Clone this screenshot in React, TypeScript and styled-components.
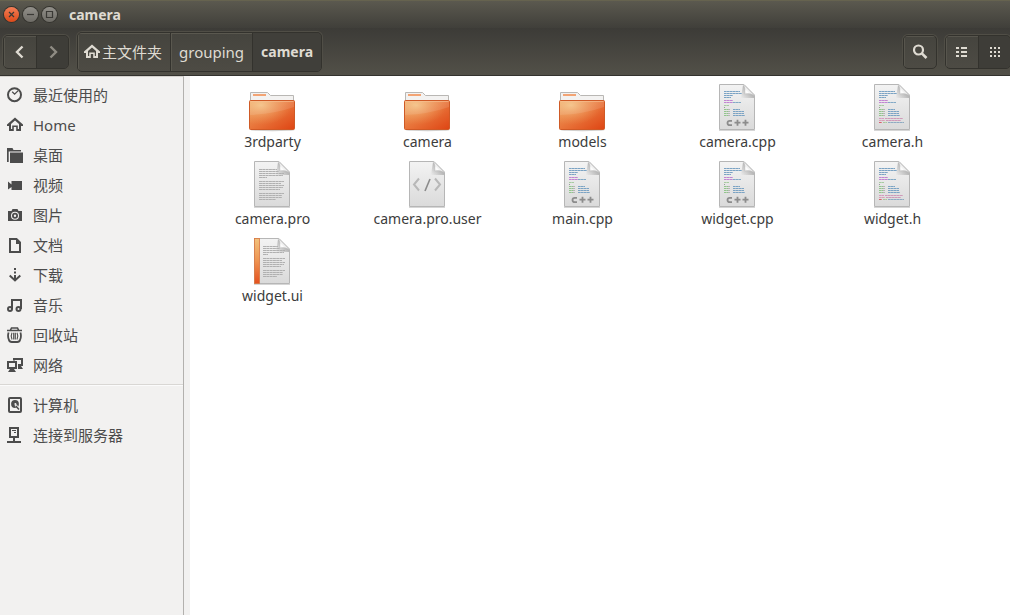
import React from 'react';
import styled, { createGlobalStyle } from 'styled-components';

const GlobalStyle = createGlobalStyle`
  * { box-sizing: border-box; }
  html, body { margin: 0; background: #ffffff; }
  body, button {
    font-family: "Noto Sans", "Noto Sans CJK SC", sans-serif;
    font-size: 15px;
    line-height: 20px;
  }
  button { margin: 0; padding: 0; border: 0; background: none; color: inherit; }
  ul { margin: 0; padding: 0; list-style: none; }
`;

const Window = styled.div`
  display: flex;
  flex-direction: column;
  min-height: 100vh;
`;

const TitleBar = styled.header`
  display: flex;
  align-items: center;
  height: 28px;
  padding: 0 4px;
  gap: 4px;
  border-top: 1px solid #66634f;
  background: linear-gradient(#5b594f, #403f3a);
`;

const WindowButton = styled.button<{ $close?: boolean }>`
  display: flex;
  width: 15px;
  height: 15px;
  border-radius: 50%;
  color: #3a3935;
  background: ${(p) => (p.$close ? 'linear-gradient(#f47e56, #dd4a19)' : 'linear-gradient(#92908a, #6e6c66)')};
  box-shadow: 0 0 0 1px #35342f;
`;

const Title = styled.h1`
  margin: 0 0 0 8px;
  font-size: 14px;
  line-height: 20px;
  font-weight: 700;
  color: #dfdbd2;
`;

const Toolbar = styled.nav`
  display: flex;
  align-items: center;
  gap: 8px;
  height: 48px;
  padding-left: 3px;
  overflow: hidden;
  border-bottom: 1px solid #33322e;
  background: linear-gradient(#3c3b37, #525048);
`;

const ButtonGroup = styled.div<{ $tall?: boolean }>`
  display: flex;
  height: ${(p) => (p.$tall ? 40 : 34)}px;
  overflow: hidden;
  border: 1px solid #33322d;
  border-radius: 5px;
  box-shadow: 0 0 0 1px #504e46;
  background: linear-gradient(#45443e, #4d4b44);
  &:last-child { margin-right: -1px; }
`;

const ToolButton = styled.button<{ $active?: boolean }>`
  display: flex;
  align-items: center;
  justify-content: center;
  width: 32px;
  color: #dfdbd2;
  background: ${(p) => (p.$active ? '#3e3d38' : 'transparent')};
  box-shadow: ${(p) => (p.$active ? 'none' : 'inset 1px 1px #57554d')};
  &:disabled { color: #8f8c84; }
  & + & { border-left: 1px solid #33322d; }
`;

const PathButton = styled.button<{ $current?: boolean }>`
  display: flex;
  align-items: center;
  padding: 0 8px;
  font-size: ${(p) => (p.$current ? 14 : 15)}px;
  font-weight: ${(p) => (p.$current ? 700 : 400)};
  color: #dfdbd2;
  background: ${(p) => (p.$current ? '#403f3a' : 'transparent')};
  box-shadow: ${(p) => (p.$current ? 'none' : 'inset 1px 1px #5a584f')};
  &:first-child { padding-left: 6px; gap: 2px; }
  & + & { border-left: 1px solid #33322d; }
`;

const Spacer = styled.div`
  flex: 1;
`;

const Body = styled.div`
  display: flex;
  flex: 1;
`;

const Sidebar = styled.aside`
  width: 184px;
  flex: none;
  padding-top: 3px;
  border-top: 1px solid #d5d2ce;
  border-right: 1px solid #b3b1ae;
  background: #f2f1f0;
  color: #4c4c4c;
`;

const PlaceLink = styled.a`
  display: flex;
  align-items: center;
  gap: 10px;
  height: 30px;
  padding-left: 7px;
  color: inherit;
  text-decoration: none;
`;

const Divider = styled.hr`
  height: 2px;
  margin: 4px 0;
  border: 0;
  border-top: 1px solid #d9d7d4;
  background: #fbfbfb;
`;

const Handle = styled.div`
  width: 6px;
  flex: none;
  background: #f2f1f0;
`;

const Files = styled.main`
  flex: 1;
  background: #ffffff;
`;

const FileGrid = styled.ul`
  display: grid;
  grid-template-columns: repeat(auto-fill, 155px);
  row-gap: 9px;
  padding: 8px 0 8px 5px;
`;

const FileButton = styled.button`
  display: flex;
  flex-direction: column;
  align-items: center;
  width: 100%;
  color: #3c3c3c;
`;

const FileLabel = styled.span`
  font-size: 14px;
  line-height: 20px;
`;

const Svg16 = ({ children }: { children: React.ReactNode }) => (
  <svg width="16" height="16" viewBox="0 0 16 16" fill="none" stroke="currentColor" strokeWidth="2" aria-hidden="true">
    {children}
  </svg>
);

const solid = { fill: 'currentColor', stroke: 'none' };

const HomeIcon = () => (
  <Svg16>
    <path {...solid} fillRule="evenodd" d="M8 0.6L16 7.6V9H14V14H9.2V10H6.8V14H2V9H0V7.6ZM8 3.4L4 7V12H5.2V8.4H10.8V12H12V7Z" />
  </Svg16>
);

const placeIcons: Record<string, React.ReactNode> = {
  recent: (
    <Svg16><circle cx="7.5" cy="7.7" r="6.5" /><path strokeWidth="1.3" d="M5.2 4.8L7.6 7.2L11.2 3.6" /></Svg16>
  ),
  home: <HomeIcon />,
  desktop: (
    <Svg16><path {...solid} d="M0 1H5.5L6.5 3H14V4.5H1.7V15H0ZM3 5.5H16V16H3Z" /></Svg16>
  ),
  video: <Svg16><path {...solid} d="M1 4.5L4.5 7.5V4H15V13H4.5V10L1 12.5Z" /></Svg16>,
  pictures: (
    <Svg16>
      <path {...solid} fillRule="evenodd" d="M1 4H4.5L5.5 2H10.5L11.5 4H15V14H1ZM8 4.8A4 4 0 1 0 8 12.8A4 4 0 1 0 8 4.8Z" />
      <circle cx="8" cy="8.8" r="2.1" strokeWidth="1.8" />
    </Svg16>
  ),
  documents: (
    <Svg16><path d="M3 2H9.5L13 5.5V15H3Z" /><path {...solid} d="M9 2L14 6V7H9Z" /></Svg16>
  ),
  downloads: (
    <Svg16><path d="M8 1V3M8 4.5V6.5M8 8V13" /><path d="M2.7 8.5L8 13.5L13.3 8.5" /></Svg16>
  ),
  music: (
    <Svg16><circle cx="3" cy="12" r="2" /><circle cx="11.5" cy="12" r="2" /><path d="M5 12V3H14V12" /></Svg16>
  ),
  trash: (
    <Svg16>
      <path strokeWidth="1.6" d="M3.5 3L4.5 1H10.5L11.5 3M0 3.5H15" />
      <path strokeWidth="1.8" d="M1.6 5.5Q0.4 9 1.8 12.5Q2.4 15 4.8 15H10.2Q12.6 15 13.2 12.5Q14.6 9 13.4 5.5" />
      <path strokeWidth="1.1" d="M5 5.8Q3.4 9 5 12.5M10 5.8Q11.6 9 10 12.5M6.7 5.8V12.5M8.3 5.8V12.5" />
    </Svg16>
  ),
  network: (
    <Svg16>
      <path strokeWidth="2" d="M1 5H9V11H1ZM7 3.5V2H15V8H11" />
      <path {...solid} d="M3 12H7L9 15H1ZM11 9H14L16 12H11Z" />
    </Svg16>
  ),
  computer: (
    <Svg16>
      <rect x="2" y="1" width="12" height="14" rx="1" />
      <circle {...solid} cx="8" cy="7" r="3.9" />
      <circle cx="8.4" cy="7" r="1" fill="#f2f1f0" stroke="none" />
      <path strokeWidth="2.4" stroke="#f2f1f0" d="M8.5 8L12 12.5" />
      <path strokeWidth="1.6" d="M8.8 9L12 12.5" />
    </Svg16>
  ),
  server: (
    <Svg16>
      <path d="M3 1H11V10H3ZM7 10V15M0 15H14" />
      <path strokeWidth="1" d="M5 3.5H9M7 5.5H9" />
    </Svg16>
  ),
};

const places = [
  ['recent', '最近使用的'],
  ['home', 'Home'],
  ['desktop', '桌面'],
  ['video', '视频'],
  ['pictures', '图片'],
  ['documents', '文档'],
  ['downloads', '下载'],
  ['music', '音乐'],
  ['trash', '回收站'],
  ['network', '网络'],
];

const devices = [
  ['computer', '计算机'],
  ['server', '连接到服务器'],
];

type Kind = 'folder' | 'cpp' | 'header' | 'text' | 'markup' | 'ui';

const FolderArt = () => (
  <>
    <defs>
      <linearGradient id="folderBody" x1="0" y1="0" x2="1" y2="1">
        <stop offset="0" stopColor="#f0a662" />
        <stop offset="0.5" stopColor="#e8743a" />
        <stop offset="1" stopColor="#de4413" />
      </linearGradient>
      <radialGradient id="folderShine" cx="0.25" cy="0.15" r="0.7">
        <stop offset="0" stopColor="#f6cf92" stopOpacity="0.75" />
        <stop offset="1" stopColor="#f0a060" stopOpacity="0" />
      </radialGradient>
    </defs>
    <ellipse cx="23.5" cy="46" rx="22" ry="1.2" fill="#d2d0ce" />
    <path d="M1.5 17V8.5H18.5L21.5 11.5H44.5V17Z" fill="#f3f2f1" stroke="#b9b7b4" />
    <rect x="4" y="10" width="13" height="2" fill="#f3a474" />
    <rect x="0.5" y="16.5" width="45" height="29" rx="1" fill="url(#folderBody)" stroke="#cf5a26" />
    <rect x="1" y="17" width="44" height="28" fill="url(#folderShine)" />
    <path d="M1 31Q25 30 45 23V17H1Z" fill="#ffffff" opacity="0.1" />
    <path d="M1.5 17.5H44.5" stroke="#f8c294" opacity="0.6" />
  </>
);

const PageArt = () => (
  <>
    <defs>
      <linearGradient id="paper" x1="0" y1="0" x2="0" y2="1">
        <stop offset="0" stopColor="#f3f3f3" />
        <stop offset="1" stopColor="#dadada" />
      </linearGradient>
      <linearGradient id="fold" x1="0" y1="1" x2="1" y2="0">
        <stop offset="0" stopColor="#c9c9c9" />
        <stop offset="0.3" stopColor="#ffffff" />
        <stop offset="0.6" stopColor="#dcdcdc" />
      </linearGradient>
      <linearGradient id="foldShade" x1="1" y1="0" x2="0" y2="1">
        <stop offset="0.4" stopColor="#8a8a8a" stopOpacity="0.6" />
        <stop offset="1" stopColor="#8a8a8a" stopOpacity="0" />
      </linearGradient>
    </defs>
    <path d="M5 46.5H41" stroke="#d6d6d6" />
    <path d="M5.5 0.5H30L40.5 11V45.5H5.5Z" fill="url(#paper)" stroke="#b6b6b6" />
    <path d="M29 1L27 14H40V11Z" fill="url(#foldShade)" />
    <path d="M29.5 0.5Q32 5 30.5 10Q36 8.5 40.5 11.5Z" fill="url(#fold)" stroke="#c2c2c2" strokeWidth="0.6" />
  </>
);

/* Each bar of source code: x, y, length, colour */
type Bar = [number, number, number, string];

const sharedBars: Bar[] = [
  [10, 7, 16, '#7ba3c4'], [10, 9, 18, '#7ba3c4'], [10, 11, 9, '#7ba3c4'], [10, 13, 7, '#7ba3c4'],
  [10, 16, 9, '#c285d2'], [10, 18, 9, '#c285d2'], [19, 18, 8, '#82a9c6'],
  [10, 21, 5, '#a7cba0'], [10, 23, 1, '#9a9a9a'],
  [10, 25, 4, '#92c58c'], [14, 25, 2, '#b5b5b5'], [19, 25, 7, '#7ba3c4'],
  [10, 27, 4, '#92c58c'], [14, 27, 2, '#b5b5b5'], [19, 27, 11, '#7ba3c4'],
  [10, 29, 4, '#92c58c'], [14, 29, 2, '#b5b5b5'], [19, 29, 11, '#7ba3c4'],
  [10, 31, 4, '#92c58c'], [14, 31, 2, '#b5b5b5'], [19, 31, 12, '#7ba3c4'],
];

const headerBars: Bar[] = [
  [10, 34, 5, '#d79ac0'], [16, 34, 18, '#cf9ab9'],
  [10, 36, 6, '#dba0b8'], [17, 36, 15, '#cf9ab9'],
  [10, 38, 3, '#d95f6f'], [14, 38, 4, '#a8c79c'], [19, 38, 16, '#8eabc2'],
];

const Bars = ({ bars }: { bars: Bar[] }) => (
  <>
    {bars.map(([x, y, length, color]) => (
      <path key={`${x}-${y}`} d={`M${x} ${y + 0.5}h${length}`} stroke={color} strokeDasharray="2.7 0.3" />
    ))}
  </>
);

const proseLines = [8, 10, 12, 14, 16, 20, 22, 24, 26, 28, 32, 34, 36, 38];
const proseWidths = [18, 20, 25, 24, 8, 25, 22, 25, 24, 21, 25, 23, 23, 17];

const Prose = ({ x, trim = 0 }: { x: number; trim?: number }) => (
  <>
    {proseLines.map((y, i) => (
      <path key={y} d={`M${x} ${y + 0.5}h${proseWidths[i] - trim}`} stroke="#b0b0b0" strokeDasharray="3 0.3" />
    ))}
  </>
);

const FileArt = ({ kind }: { kind: Kind }) => (
  <svg width="47" height="48" viewBox="0 0 47 48" fill="none" aria-hidden="true">
    {kind === 'folder' ? <FolderArt /> : <PageArt />}
    {(kind === 'cpp' || kind === 'header') && <Bars bars={sharedBars} />}
    {kind === 'header' && <Bars bars={headerBars} />}
    {kind === 'cpp' && (
      <g stroke="#8c8c8c" strokeWidth="1.8">
        <path d="M18 36.8H15.8Q13.5 36.8 13.5 39Q13.5 41.2 15.8 41.2H18" />
        <path d="M20.5 38.7H26.5M23.5 35.7V41.7M28.5 38.7H34.5M31.5 35.7V41.7" />
      </g>
    )}
    {kind === 'text' && <Prose x={10} />}
    {kind === 'markup' && (
      <>
        <path d="M15 17.5L10 23.5L15 29.5M31 17.5L36 23.5L31 29.5" stroke="#b8b8b8" strokeWidth="2" />
        <path d="M26 18L21 30" stroke="#8b8b8b" strokeWidth="1.6" />
      </>
    )}
    {kind === 'ui' && (
      <>
        <defs>
          <linearGradient id="spine" x1="0" y1="0" x2="0" y2="1">
            <stop offset="0" stopColor="#f2c17c" />
            <stop offset="0.5" stopColor="#ee9350" />
            <stop offset="1" stopColor="#e4501f" />
          </linearGradient>
        </defs>
        <rect x="5.5" y="0.5" width="5" height="45" fill="url(#spine)" stroke="#d97740" strokeWidth="0.8" />
        <Prose x={14} trim={3} />
      </>
    )}
  </svg>
);

const files: [string, Kind][] = [
  ['3rdparty', 'folder'],
  ['camera', 'folder'],
  ['models', 'folder'],
  ['camera.cpp', 'cpp'],
  ['camera.h', 'header'],
  ['camera.pro', 'text'],
  ['camera.pro.user', 'markup'],
  ['main.cpp', 'cpp'],
  ['widget.cpp', 'cpp'],
  ['widget.h', 'header'],
  ['widget.ui', 'ui'],
];

const PlaceList = ({ items }: { items: string[][] }) => (
  <ul>
    {items.map(([icon, label]) => (
      <li key={icon}>
        <PlaceLink href={`#${icon}`}>{placeIcons[icon]}{label}</PlaceLink>
      </li>
    ))}
  </ul>
);

const WindowGlyph = ({ d }: { d: string }) => (
  <svg width="15" height="15" viewBox="0 0 15 15" fill="none" stroke="currentColor" strokeWidth="1.2" aria-hidden="true">
    <path d={d} />
  </svg>
);

export default function App() {
  return (
    <Window>
      <GlobalStyle />
      <TitleBar>
        <WindowButton $close aria-label="Close"><WindowGlyph d="M5 5L10 10M10 5L5 10" /></WindowButton>
        <WindowButton aria-label="Minimize"><WindowGlyph d="M4 7.5H11" /></WindowButton>
        <WindowButton aria-label="Maximize"><WindowGlyph d="M4.5 4.5H10.5V10.5H4.5Z" /></WindowButton>
        <Title>camera</Title>
      </TitleBar>
      <Toolbar aria-label="Location">
        <ButtonGroup>
          <ToolButton aria-label="Back"><Svg16><path strokeWidth="2.4" d="M10.5 2.5L5 8L10.5 13.5" /></Svg16></ToolButton>
          <ToolButton aria-label="Forward" $active disabled><Svg16><path strokeWidth="2.4" d="M5.5 2.5L11 8L5.5 13.5" /></Svg16></ToolButton>
        </ButtonGroup>
        <ButtonGroup $tall>
          <PathButton><HomeIcon />主文件夹</PathButton>
          <PathButton>grouping</PathButton>
          <PathButton $current>camera</PathButton>
        </ButtonGroup>
        <Spacer />
        <ButtonGroup>
          <ToolButton aria-label="Search">
            <Svg16><circle cx="6.5" cy="6" r="4.5" strokeWidth="2.2" /><path strokeWidth="2.6" d="M9.8 9.3L14.5 14" /></Svg16>
          </ToolButton>
        </ButtonGroup>
        <ButtonGroup>
          <ToolButton aria-label="List view">
            <Svg16><path d="M2 4H5M7 4H13M2 8H5M7 8H13M2 12H5M7 12H13" /></Svg16>
          </ToolButton>
          <ToolButton aria-label="Icon view" $active>
            <Svg16><path d="M3 4H5M7 4H9M11 4H13M3 8H5M7 8H9M11 8H13M3 12H5M7 12H9M11 12H13" /></Svg16>
          </ToolButton>
        </ButtonGroup>
      </Toolbar>
      <Body>
        <Sidebar>
          <PlaceList items={places} />
          <Divider />
          <PlaceList items={devices} />
        </Sidebar>
        <Handle />
        <Files>
          <FileGrid>
            {files.map(([name, kind]) => (
              <li key={name}>
                <FileButton>
                  <FileArt kind={kind} />
                  <FileLabel>{name}</FileLabel>
                </FileButton>
              </li>
            ))}
          </FileGrid>
        </Files>
      </Body>
    </Window>
  );
}
